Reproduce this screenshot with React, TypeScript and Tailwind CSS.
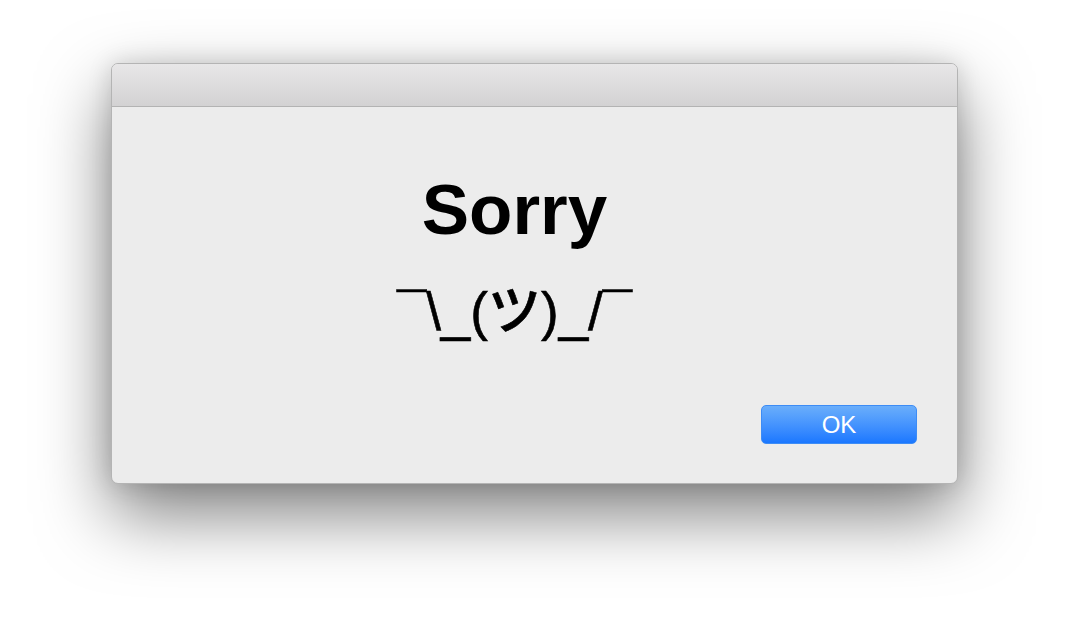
export default function App() {
  return (
    <div className="h-[644px] w-[1070px] bg-white pl-[111px] pt-[63px]">
      <div className="flex h-[421px] w-[847px] flex-col overflow-hidden rounded-[7px] border border-[#b4b4b4] bg-[#ececec] shadow-[0_30px_70px_rgba(0,0,0,0.5),0_0_24px_rgba(0,0,0,0.14)]">
        <div className="h-[43px] shrink-0 border-b border-[#b3b3b3] bg-gradient-to-b from-[#e8e7e8] to-[#d3d2d3]" />
        <div className="flex flex-1 flex-col px-[40px] pb-[39px]" style={{ fontFamily: '"Liberation Sans", Arial, "Noto Sans CJK JP", sans-serif' }}>
          <div className="flex flex-col items-center pr-[40px] pt-[67px]">
            <h1 className="text-[71px] font-bold leading-none text-black">Sorry</h1>
            <p className="mt-[40px] text-[53px] font-medium leading-none text-black [-webkit-text-stroke:0.6px_black]">¯\_(ツ)_/¯</p>
          </div>
          <div className="mt-auto flex justify-end">
            <button className="h-[39px] w-[156px] rounded-[5px] border border-[#3d8cf5] bg-gradient-to-b from-[#6aaefb] to-[#1a77ff] text-[24px] leading-none text-white">
              OK
            </button>
          </div>
        </div>
      </div>
    </div>
  )
}
